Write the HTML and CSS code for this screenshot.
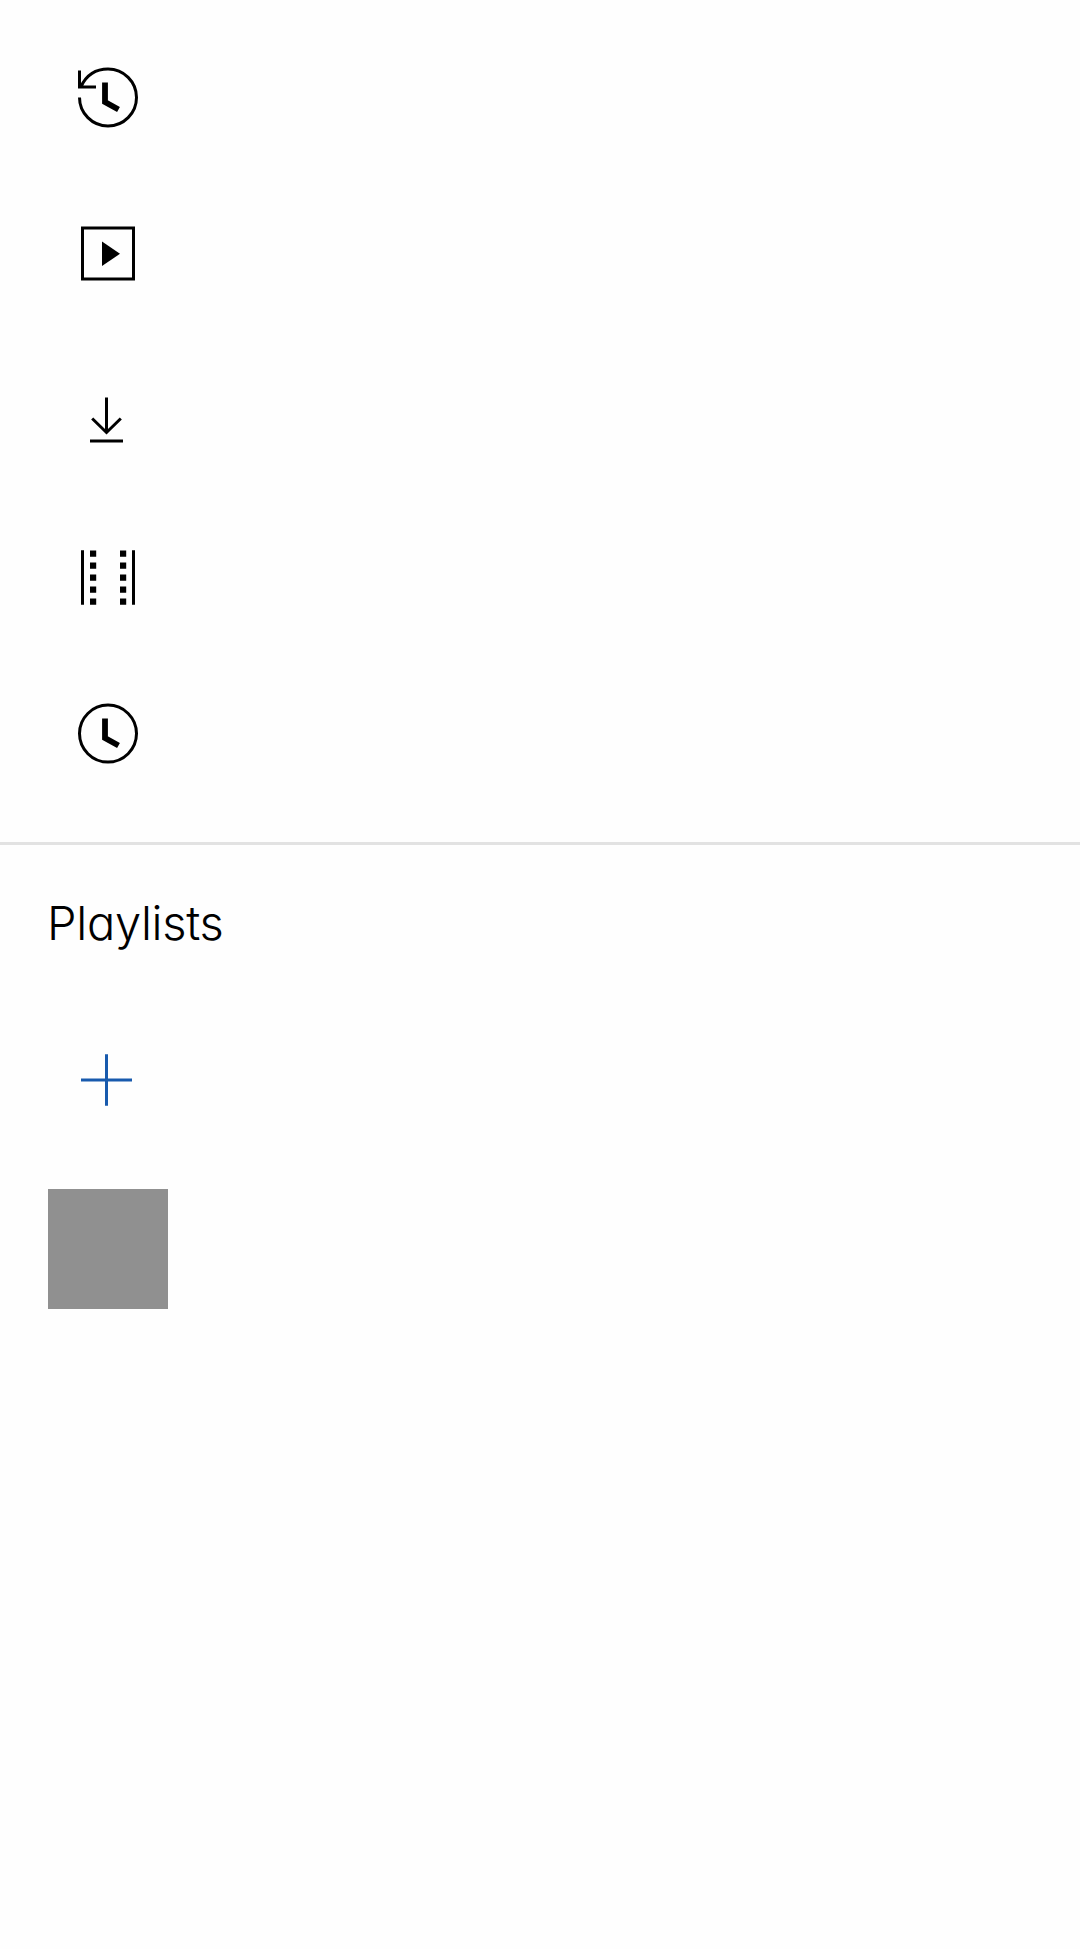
FILE: index.html
```html
<!DOCTYPE html>
<html lang="en">
<head>
<meta charset="utf-8">
<title>Library</title>
<link rel="stylesheet" href="styles.css">
</head>
<body>
<ul class="library">
<li><svg class="icon" viewBox="0 0 80 80"><path class="line" d="M11.5 39.5A28.5 28.5 0 1 0 40 11C28 11 18.500 17 13 28.500M11.5 12.500V29H28"/><path class="hands" d="M37 24.5V44L50.5 51.5"/></svg></li>
<li><svg class="icon" viewBox="0 0 80 80"><path class="line" d="M14.5 13.9H65.5V65.1H14.5Z"/><path d="M34 27.5V52L52 39.8Z"/></svg></li>
<li class="spaced"><svg class="icon" viewBox="0 0 80 80"><path class="line" d="M38.5 21.5V57M24.2 42.500L38.5 56.5L52.8 42.500M22 65H55"/></svg></li>
<li class="spaced"><svg class="icon" viewBox="0 0 80 80"><path class="line" d="M14.5 12.3V66.7M65.5 12.3V66.7"/><path class="holes" d="M25.1 12.5V66.7M55.1 12.5V66.7"/></svg></li>
<li><svg class="icon" viewBox="0 0 80 80"><circle class="line" cx="40" cy="39.6" r="28.5"/><path class="hands" d="M37 24.5V44L50.5 51.5"/></svg></li>
</ul>
<section class="playlists">
<h2>Playlists</h2>
<svg class="icon add" viewBox="0 0 80 80"><path d="M13 40H64M38.5 14.3V65.7"/></svg>
<div class="cover"></div>
</section>
</body>
</html>
```
FILE: styles.css
```css
body {
  margin: 0;
  background: #fefefe;
  color: #000;
  font-family: Inter, "Noto Sans", sans-serif;
}
.library {
  display: flex;
  flex-direction: column;
  gap: 76px;
  margin: 0;
  padding: 58px 68px 68px;
  list-style: none;
  border-bottom: 3px solid #e2e2e2;
}
.spaced { margin-top: 6px; }
.icon { display: block; width: 80px; height: 80px; }
.line { fill: none; stroke: #000; stroke-width: 3; }
.hands { fill: none; stroke: #000; stroke-width: 5.8; }
.holes { fill: none; stroke: #000; stroke-width: 6.2; stroke-dasharray: 6.2 5.8; }
.playlists { padding: 48px 47px; }
h2 {
  margin: 0;
  font-size: 47px;
  line-height: 60px;
  font-weight: 350;
  letter-spacing: -0.3px;
  font-feature-settings: "cv11";
}
.add { margin: 87px 0 0 21px; fill: none; stroke: #185aad; stroke-width: 3; }
.cover { width: 120px; height: 120px; margin: 69px 0 0 1px; background: #909090; }
```
